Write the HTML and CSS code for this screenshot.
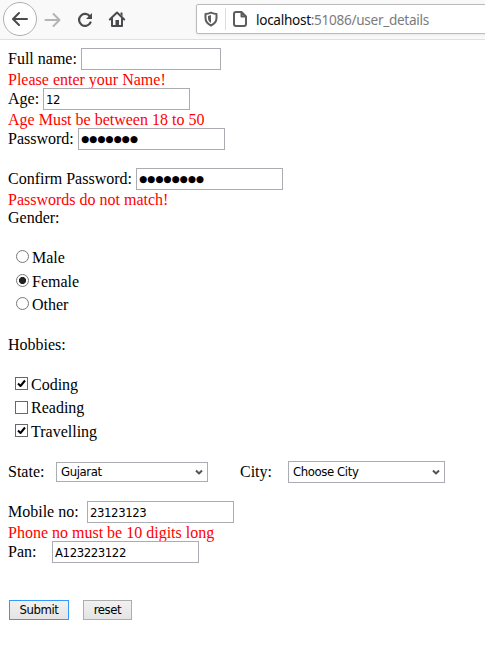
FILE: index.html
```
<!DOCTYPE html>
<html lang="en">
<head>
<meta charset="utf-8">
<title>User details</title>
<link rel="stylesheet" href="styles.css">
</head>
<body>
<header class="toolbar">
  <span class="back"><svg width="18" height="16" viewBox="0 0 18 16"><path d="M16 8H2.500M8 2 2 8l6 6"/></svg></span>
  <svg class="forward" width="18" height="16" viewBox="0 0 18 16"><path d="M1.500 8H15M9.500 2l6 6-6 6"/></svg>
  <svg class="reload" width="18" height="16" viewBox="0 0 18 16"><path d="M14 4.500A6 6 0 1 0 14.500 10.500"/><path class="solid" d="M16 1v6h-6z"/></svg>
  <svg class="home" width="18" height="18" viewBox="0 0 18 18"><path d="M1.800 9.500 9 2.500l7.200 7M4 8.500V16h10V8.500"/><path class="solid" d="M7.500 10h3.500v5H7.500zM12.500 2.500h2v4l-2-2z"/></svg>
  <div class="address">
    <svg class="shield" width="14" height="16" viewBox="0 0 14 16"><path d="M1.500 3Q4 3 7 1.700 10 3 12.500 3V7Q12.500 12 7 14.500 1.500 12 1.500 7z"/><path class="solid" d="M7 4v8Q4 10.300 4 7V5Q5.500 4.700 7 4z"/></svg>
    <span class="divider"></span>
    <svg class="page-icon" width="14" height="16" viewBox="0 0 14 16"><path d="M3 1H8.500L13 5.500V13Q13 15 11 15H3Q1 15 1 13V3Q1 1 3 1zM8.500 1V5.500H13"/></svg>
    <span class="url"><b>localhost</b>:51086/user_details</span>
  </div>
</header>
<form class="form">
  <div class="row"><label class="l-name">Full name:</label><input class="field short" type="text"></div>
  <p class="error">Please enter your Name!</p>
  <div class="row"><label class="l-age">Age:</label><input class="field" type="text" value="12"></div>
  <p class="error">Age Must be between 18 to 50</p>
  <div class="row spaced"><label class="l-pass">Password:</label><span class="field dots">●●●●●●●</span></div>
  <div class="row"><label class="l-confirm">Confirm Password:</label><span class="field dots">●●●●●●●●</span></div>
  <p class="error">Passwords do not match!</p>
  <p class="heading">Gender:</p>
  <div class="options radios">
    <label><i class="radio"></i>Male</label>
    <label><i class="radio on"></i>Female</label>
    <label><i class="radio"></i>Other</label>
  </div>
  <p class="heading">Hobbies:</p>
  <div class="options checks">
    <label><i class="check"><svg width="11" height="11" viewBox="0 0 11 11"><path d="M2 5.500 4.500 8 9 2.500"/></svg></i>Coding</label>
    <label><i class="check"></i>Reading</label>
    <label><i class="check"><svg width="11" height="11" viewBox="0 0 11 11"><path d="M2 5.500 4.500 8 9 2.500"/></svg></i>Travelling</label>
  </div>
  <div class="row places">
    <label class="l-state">State:</label><span class="select state">Gujarat<svg width="8" height="7" viewBox="0 0 8 7"><path d="M1 1.500 4 4.500 7 1.500"/></svg></span>
    <label class="l-city">City:</label><span class="select city">Choose City<svg width="8" height="7" viewBox="0 0 8 7"><path d="M1 1.500 4 4.500 7 1.500"/></svg></span>
  </div>
  <div class="row"><label class="l-mobile">Mobile no:</label><input class="field" type="text" value="23123123"></div>
  <p class="error">Phone no must be 10 digits long</p>
  <div class="row"><label class="l-pan">Pan:</label><input class="field" type="text" value="A123223122"></div>
  <div class="buttons"><button class="submit" type="button">Submit</button><button class="reset" type="button">reset</button></div>
</form>
</body>
</html>
```
FILE: styles.css
```
* { box-sizing: border-box; }
body { margin: 0; background: #fff; color: #000; font: 16px/18px "Liberation Serif", serif; overflow: hidden; height: 646px; }
p { margin: 0; }
svg { fill: none; stroke: #4b4b4d; stroke-width: 2; stroke-linecap: round; stroke-linejoin: round; flex: none; display: block; }
.solid { fill: #4b4b4d; stroke: none; }

.toolbar { display: flex; align-items: center; height: 40px; padding-left: 3px; background: #f9f9fa; border-bottom: 1px solid #e0e0e1; }
.back { display: flex; align-items: center; justify-content: center; flex: none; width: 34px; height: 34px; border: 1px solid #b0b0b1; border-radius: 50%; background: #fff; margin-bottom: 1px; }
.forward { margin-left: 7px; stroke: #b4b4b5; }
.reload { margin-left: 14px; stroke-width: 2.200; }
.home { margin-left: 14px; margin-bottom: 1px; }
.address { display: flex; align-items: center; width: 300px; height: 30px; margin: 0 0 1px 70px; padding-left: 8px; border: 1px solid #bbb; border-radius: 2px; background: #fff; box-shadow: 0 1px 3px #0001; flex: none; }
.shield, .page-icon { stroke: #5d5d5f; }
.shield { margin-left: -1px; }
.shield .solid { fill: #5d5d5f; }
.divider { width: 1px; height: 22px; margin: 0 7px; background: #ddd; }
.url { margin: 1px 0 0 9px; font: 13.600px/20px "Noto Sans", sans-serif; letter-spacing: -0.300px; color: #7b7b7d; white-space: pre; }
.url b { color: #0c0c0d; font-weight: 400; }

.form { padding: 8px 8px 0; }
.row { display: flex; align-items: center; height: 22px; }
.row label { flex: none; white-space: nowrap; }
.spaced { margin-bottom: 18px; }
.error { height: 18px; line-height: 20px; color: #f00; }
.l-name { width: 73px; }
.l-age { width: 35px; }
.l-pass { width: 70px; }
.l-confirm { width: 128px; }
.l-state { width: 48px; }
.l-city { width: 48px; margin-left: 32px; }
.l-mobile { width: 79px; }
.l-pan { width: 44px; }
.field, .select, button { font: 13px/18px "DejaVu Sans Condensed", "DejaVu Sans", sans-serif; font-stretch: condensed; letter-spacing: -0.400px; color: #000; }
.field { display: block; width: 147px; height: 22px; margin: 0; padding: 1px 2px; border: 1px solid #ababb2; border-radius: 0; background: #fff; }
.short { width: 140px; }
.dots { font: 9.300px/20px "DejaVu Sans", sans-serif; letter-spacing: 0; padding: 0 2px; white-space: nowrap; }
.heading { height: 20px; line-height: 18px; padding-top: 1px; }
.options label { display: flex; align-items: center; height: 23.500px; }
.radios { margin: 18px 0 18px 8px; height: 71px; }
.radios label:nth-child(2) { padding-top: 1px; }
.checks { margin: 18px 0 18px 7px; height: 70px; }
.radio { width: 13px; height: 13px; margin: 0 3px 2px 0; border: 1px solid #77777b; border-radius: 50%; background: #fff; }
.radio.on { background: radial-gradient(circle, #222 3.200px, #fff 3.900px); }
.check { width: 13px; height: 13px; margin: 0 3px 2px 0; border: 1px solid #68686c; }
.check svg { stroke: #000; stroke-linecap: butt; }
.places { margin-bottom: 18px; }
.select { display: flex; align-items: center; justify-content: space-between; border: 1px solid #ababb2; padding: 0 4px; }
.select svg { stroke: #555; stroke-linecap: butt; }
.state { width: 152px; height: 20px; }
.city { width: 157px; height: 22px; }
.buttons { display: flex; gap: 14px; margin: 37px 0 0 1px; }
button { height: 20px; padding: 0; border: 1px solid #adadad; border-radius: 0; background: linear-gradient(#f1f1f1, #e4e4e4); }
.submit { width: 60px; border-color: #3399ff; }
.reset { width: 49px; }
```
